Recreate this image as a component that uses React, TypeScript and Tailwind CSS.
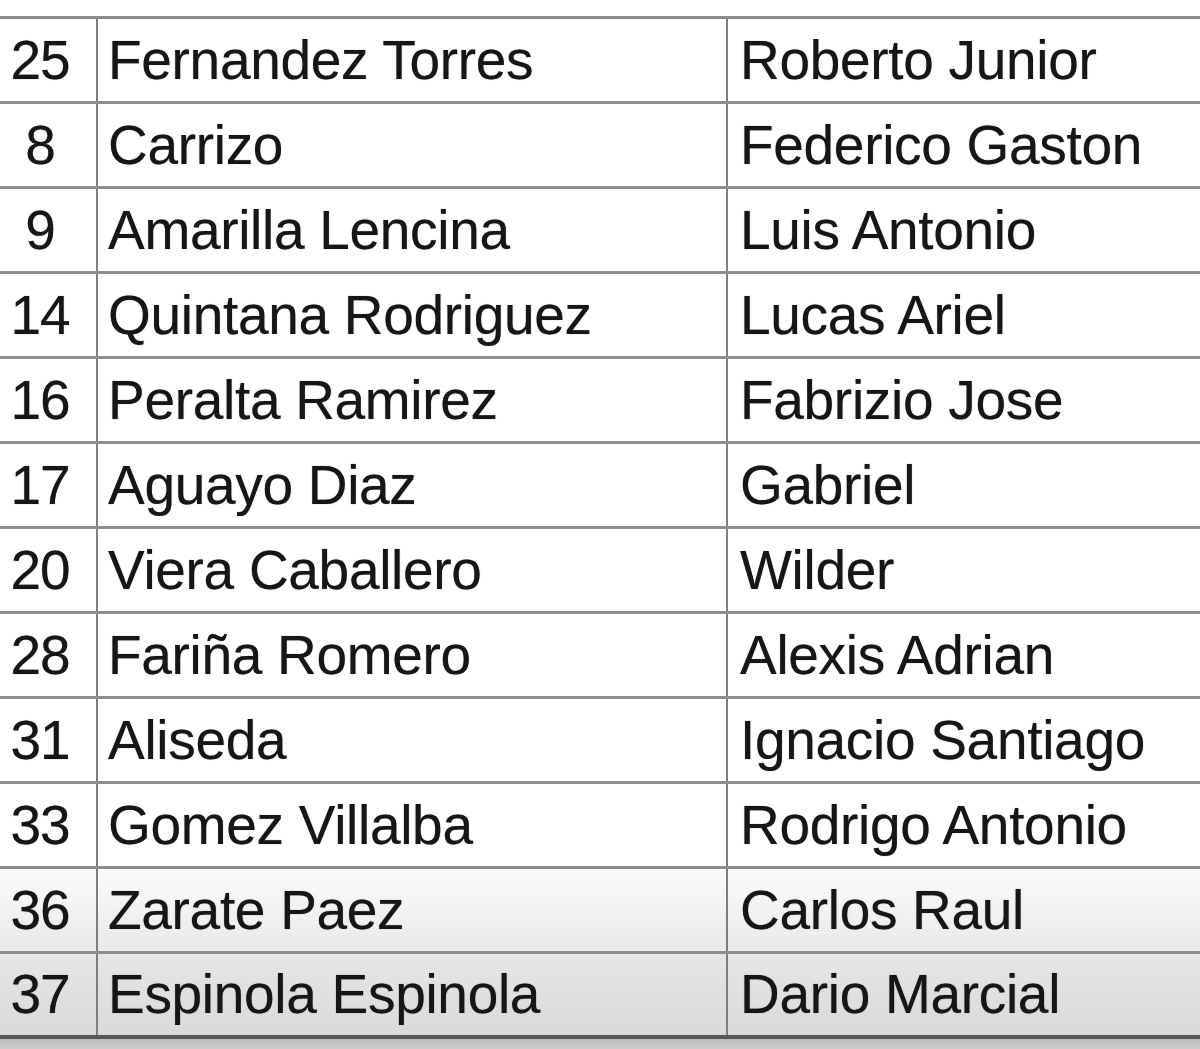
import React from "react";

const rows: [string, string, string][] = [
  ["25", "Fernandez Torres", "Roberto Junior"],
  ["8", "Carrizo", "Federico Gaston"],
  ["9", "Amarilla Lencina", "Luis Antonio"],
  ["14", "Quintana Rodriguez", "Lucas Ariel"],
  ["16", "Peralta Ramirez", "Fabrizio Jose"],
  ["17", "Aguayo Diaz", "Gabriel"],
  ["20", "Viera Caballero", "Wilder"],
  ["28", "Fariña Romero", "Alexis Adrian"],
  ["31", "Aliseda", "Ignacio Santiago"],
  ["33", "Gomez Villalba", "Rodrigo Antonio"],
  ["36", "Zarate Paez", "Carlos Raul"],
  ["37", "Espinola Espinola", "Dario Marcial"],
];

const bgFor = (i: number) => {
  if (i === 10) return "bg-gradient-to-b from-[#fbfbfb] to-[#e9e9e9]";
  if (i === 11) return "bg-gradient-to-b from-[#e6e6e6] to-[#dadada]";
  return "bg-white";
};

export default function App() {
  return (
    <div
      className="w-[1200px] h-[1049px] overflow-hidden bg-white text-[#161616] [text-shadow:0_0_1px_rgba(0,0,0,0.6)]"
      style={{ fontFamily: '"Liberation Sans", Arial, sans-serif' }}
    >
      <div className="h-[16px] bg-white" />
      <div className="border-t-[3px] border-[#8c8c8c] w-[1220px]">
        {rows.map((r, i) => (
          <div
            key={i}
            className={`grid grid-cols-[98px_630px_1fr] h-[85px] ${
              i === rows.length - 1
                ? "border-b-[4px] border-[#585858]"
                : "border-b-[3px] border-[#8e8e8e]"
            } ${bgFor(i)}`}
          >
            <div className="flex items-center justify-center pr-[16px] border-r-[2px] border-[#7e7e7e] text-[55px] leading-none tracking-[-1px]">
              {r[0]}
            </div>
            <div className="flex items-center pl-[10px] border-r-[2px] border-[#7e7e7e] text-[55px] leading-none tracking-[-0.3px] whitespace-nowrap">
              {r[1]}
            </div>
            <div className="flex items-center pl-[12px] text-[55px] leading-none tracking-[-0.3px] whitespace-nowrap">
              {r[2]}
            </div>
          </div>
        ))}
      </div>
      <div className="h-[20px] bg-gradient-to-b from-[#bdbdbd] to-[#dedede]" />
    </div>
  );
}
